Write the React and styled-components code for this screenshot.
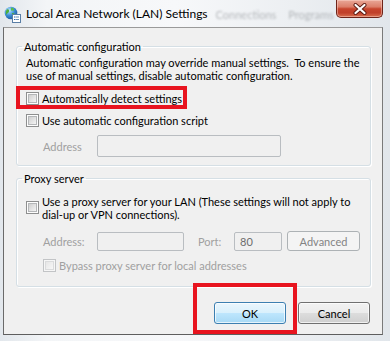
import React from 'react';
import styled, { createGlobalStyle } from 'styled-components';

const FONT = `Lato, "Liberation Sans", sans-serif`;

const Global = createGlobalStyle`
  html, body { margin: 0; padding: 0; }
  body {
    width: 390px; height: 341px; overflow: hidden;
    background: #e6eaef;
    font-family: ${FONT};
  }
`;

const Window = styled.div`
  width: 390px;
  height: 341px;
  display: flex;
  flex-direction: column;
  background: linear-gradient(90deg, #e2e7ec 0%, #f3f5f7 12%, #f7f8fa 45%, #eceff2 75%, #e1e6eb 100%);
  overflow: hidden;
`;

const TitleBar = styled.div`
  height: 27px;
  flex: none;
  display: flex;
  align-items: flex-start;
  padding-left: 4px;
`;

const TitleIcon = styled.svg`
  width: 17px;
  height: 17px;
  margin-top: 6px;
  flex: none;
`;

const TitleText = styled.div`
  margin-left: 5px;
  margin-top: 6px;
  font-size: 12px;
  line-height: 15px;
  color: #000;
  white-space: nowrap;
`;

const BlurredTabs = styled.div`
  margin-left: 8px;
  margin-top: 7px;
  display: flex;
  gap: 12px;
  font-size: 11px;
  line-height: 15px;
  color: #8c9094;
  filter: blur(1.3px);
  opacity: 0.6;
  white-space: nowrap;
`;

const Spacer = styled.div`
  flex: 1;
`;

const CloseButton = styled.div`
  width: 47px;
  height: 18px;
  margin-right: 7px;
  box-sizing: border-box;
  border: 1px solid #6e2419;
  border-top: none;
  border-radius: 0 0 5px 5px;
  background: linear-gradient(180deg, #e9a797 0%, #dc7f6a 40%, #c7452d 52%, #c0402a 75%, #d8704f 100%);
  box-shadow: inset 0 0 0 1px rgba(255, 220, 210, 0.45);
  display: flex;
  align-items: center;
  justify-content: center;
  flex: none;
`;

const Client = styled.div`
  flex: none;
  height: 308px;
  margin: 0 7px 0 3px;
  box-sizing: border-box;
  border: 1px solid #7a7a7a;
  border-top-color: #9a9a9a;
  border-bottom-color: #5e5e5e;
  border-left-color: #6a6a6a;
  background: #f0f0f0;
  padding: 11px 11px 0 12px;
  display: flex;
  flex-direction: column;
  font-size: 11px;
  color: #000;
`;

const Group = styled.fieldset`
  margin: ${p => p.$top || 0}px 0 0 0;
  padding: 2px 9px ${p => p.$bottom || 8}px 9px;
  border: 1px solid #d5dfe5;
  border-radius: 3px;
  box-shadow: inset 1px 1px 0 #fff, 1px 1px 0 #fff;
  min-width: 0;
`;

const Legend = styled.legend`
  padding: 0 2px;
  margin-left: -4px;
  font-size: 11px;
  line-height: 15px;
`;

const Description = styled.p`
  margin: 0;
  font-size: 11px;
  line-height: 13px;
  white-space: nowrap;
`;

const CheckRow = styled.label`
  display: flex;
  align-items: ${p => (p.$top ? 'flex-start' : 'center')};
  margin-top: ${p => p.$mt || 0}px;
  margin-left: ${p => p.$indent || 0}px;
  line-height: 13px;
  height: ${p => (p.$top ? 'auto' : '15px')};
  color: ${p => (p.$disabled ? '#a0a0a0' : '#000')};
  white-space: nowrap;
  width: max-content;
  position: relative;
`;

const Highlight = styled.div`
  position: relative;
  width: max-content;
  margin-top: ${p => p.$mt || 0}px;
  &::after {
    content: '';
    position: absolute;
    top: ${p => p.$t}px;
    bottom: ${p => p.$b}px;
    left: ${p => p.$l}px;
    right: ${p => p.$r}px;
    border: 4px solid #e8141f;
    pointer-events: none;
  }
`;

const Box = styled.span`
  width: 13px;
  height: 13px;
  box-sizing: border-box;
  flex: none;
  border: 1px solid ${p => (p.$disabled ? '#c2c4c6' : '#8e8f8f')};
  padding: 1px;
  background: ${p => (p.$disabled ? '#f6f6f6' : '#fdfdfd')};
  margin-right: 3px;
  margin-top: ${p => p.$mt || 0}px;
  &::before {
    content: '';
    display: block;
    width: 9px;
    height: 9px;
    box-sizing: border-box;
    border: 1px solid ${p => (p.$disabled ? '#dadbdc' : '#b4b6b8')};
    background: ${p =>
      p.$disabled
        ? 'linear-gradient(135deg, #e6e6e6, #f7f7f7)'
        : 'linear-gradient(135deg, #cfcfcf, #f4f4f4)'};
  }
`;

const FieldRow = styled.div`
  display: flex;
  align-items: center;
  margin-top: ${p => p.$mt || 0}px;
  padding-left: 17px;
`;

const FieldLabel = styled.span`
  width: ${p => p.$w}px;
  padding-left: ${p => p.$pl || 0}px;
  flex: none;
  color: #a0a0a0;
  white-space: nowrap;
`;

const Field = styled.div`
  width: ${p => p.$w}px;
  height: ${p => p.$h}px;
  box-sizing: border-box;
  flex: none;
  border: 1px solid #b9bdc1;
  border-radius: 2px;
  background: #f0f0f0;
  color: #6d6d6d;
  font-size: 11px;
  line-height: ${p => p.$h - 2}px;
  padding-left: 5px;
`;

const Button = styled.div`
  width: ${p => p.$w || 72}px;
  height: ${p => p.$h || 22}px;
  box-sizing: border-box;
  flex: none;
  margin-left: ${p => p.$ml || 0}px;
  border: 1px solid ${p => (p.$disabled ? '#adb2b5' : p.$primary ? '#3c7fb1' : '#707070')};
  border-radius: 3px;
  background: ${p =>
    p.$disabled
      ? '#f4f4f4'
      : p.$primary
      ? 'linear-gradient(180deg, #eaf6fd 0%, #d9f0fc 49%, #bee6fd 50%, #a7d9f5 100%)'
      : 'linear-gradient(180deg, #f2f2f2 0%, #ebebeb 49%, #dddddd 50%, #cfcfcf 100%)'};
  box-shadow: inset 0 0 0 1px ${p => (p.$disabled ? '#f4f4f4' : 'rgba(255,255,255,0.7)')};
  color: ${p => (p.$disabled ? '#838383' : '#000')};
  display: flex;
  align-items: center;
  justify-content: center;
  font-size: 11px;
  position: relative;
`;

const ButtonBar = styled.div`
  display: flex;
  justify-content: flex-end;
  margin-top: 15px;
  padding-right: 1px;
`;

const GlobeIcon = () => (
  <TitleIcon viewBox="0 0 17 17">
    <defs>
      <radialGradient id="g1" cx="0.35" cy="0.3" r="0.8">
        <stop offset="0" stopColor="#bfe6ff" />
        <stop offset="0.5" stopColor="#3b8fd6" />
        <stop offset="1" stopColor="#1b4f94" />
      </radialGradient>
    </defs>
    <circle cx="7" cy="7" r="6.3" fill="url(#g1)" />
    <path d="M3 3.5 C4.5 3 5.5 4 5 5.5 C4.5 7 3 7 2.5 9 C1.5 7 1.5 5 3 3.5 Z" fill="#4caf3c" />
    <path d="M7.5 1.5 C9.5 2 10.5 3 10 4.5 C9 5 8 4 7.5 5 C7 4 6.5 2.5 7.5 1.5 Z" fill="#5bbf45" />
    <path d="M8 7 C10 6.5 11.5 8 11 10 C10 11.5 8.5 11 8 9.5 Z" fill="#4caf3c" />
    <rect x="8.5" y="8.5" width="8" height="8" fill="#fff" stroke="#5a7fa6" strokeWidth="1" />
    <rect x="10" y="10.5" width="1.5" height="1" fill="#2d6bb5" />
    <rect x="12" y="10.5" width="3" height="1" fill="#6b8fb5" />
    <rect x="10" y="13" width="1.5" height="1" fill="#2d6bb5" />
    <rect x="12" y="13" width="3" height="1" fill="#6b8fb5" />
  </TitleIcon>
);

const CloseGlyph = () => (
  <svg width="14" height="12" viewBox="0 0 14 12">
    <path d="M2.5 2 L11.5 10 M11.5 2 L2.5 10" stroke="#5a1a12" strokeWidth="4" strokeLinecap="round" />
    <path d="M2.5 2 L11.5 10 M11.5 2 L2.5 10" stroke="#ffffff" strokeWidth="2.2" strokeLinecap="round" />
  </svg>
);

const Check = ({ disabled, mt }) => <Box $disabled={disabled} $mt={mt} />;

export default function App() {
  return (
    <>
      <Global />
      <Window>
        <TitleBar>
          <GlobeIcon />
          <TitleText>Local Area Network (LAN) Settings</TitleText>
          <BlurredTabs>
            <span>Connections</span>
            <span>Programs</span>
          </BlurredTabs>
          <Spacer />
          <CloseButton>
            <CloseGlyph />
          </CloseButton>
        </TitleBar>
        <Client>
          <Group>
            <Legend>Automatic configuration</Legend>
            <Description>
              Automatic configuration may override manual settings.&nbsp; To ensure the
              <br />
              use of manual settings, disable automatic configuration.
            </Description>
            <Highlight $mt={9} $t={-5} $b={-3} $l={-10} $r={-5}>
              <CheckRow>
                <Check />
                Automatically detect settings
              </CheckRow>
            </Highlight>
            <CheckRow $mt={7}>
              <Check />
              Use automatic configuration script
            </CheckRow>
            <FieldRow $mt={7}>
              <FieldLabel $w={54}>Address</FieldLabel>
              <Field $w={184} $h={22} />
            </FieldRow>
          </Group>
          <Group $top={5} $bottom={13}>
            <Legend>Proxy server</Legend>
            <CheckRow $top $mt={7}>
              <Check mt={6} />
              <span>
                Use a proxy server for your LAN (These settings will not apply to
                <br />
                dial-up or VPN connections).
              </span>
            </CheckRow>
            <FieldRow $mt={10}>
              <FieldLabel $w={54}>Address:</FieldLabel>
              <Field $w={87} $h={19} />
              <FieldLabel $w={36} $pl={14}>Port:</FieldLabel>
              <Field $w={48} $h={19}>80</Field>
              <Button $disabled $w={73} $h={20} $ml={5}>Advanced</Button>
            </FieldRow>
            <CheckRow $mt={7} $indent={17} $disabled>
              <Check disabled />
              Bypass proxy server for local addresses
            </CheckRow>
          </Group>
          <ButtonBar>
            <Highlight $t={-19} $b={-10} $l={-21} $r={-11}>
              <Button $primary>OK</Button>
            </Highlight>
            <Button $ml={12}>Cancel</Button>
          </ButtonBar>
        </Client>
      </Window>
    </>
  );
}
